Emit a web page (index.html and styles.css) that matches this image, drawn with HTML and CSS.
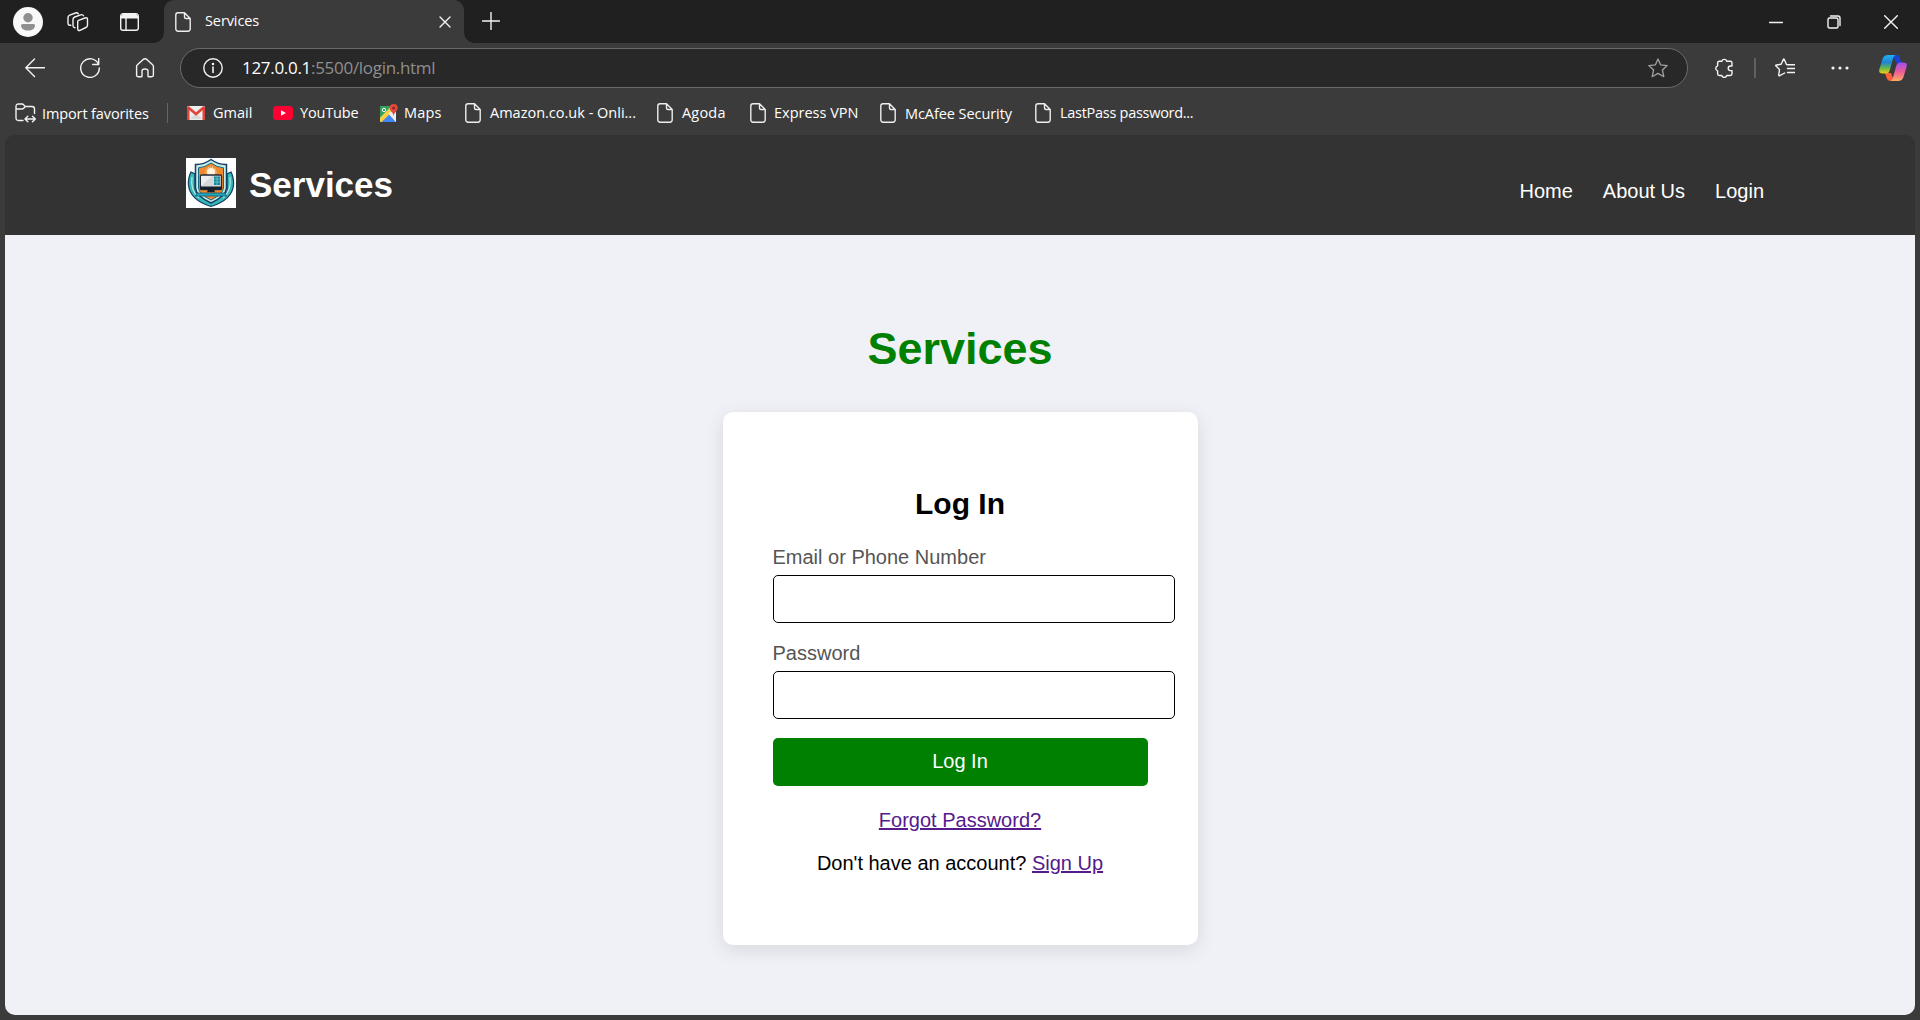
FILE: index.html
```html
<!DOCTYPE html>
<html lang="en">
<head>
<meta charset="utf-8">
<title>Services</title>
<link rel="stylesheet" href="styles.css">
</head>
<body>
<svg class="defs" aria-hidden="true">
  <symbol id="file" viewBox="0 0 16 20"><path d="M3 .8h6.500L15.200 6.500V17a2.200 2.200 0 0 1-2.200 2.200H3A2.200 2.200 0 0 1 .8 17V3A2.200 2.200 0 0 1 3 .8zM9.500.8V5a1.500 1.500 0 0 0 1.500 1.500h4.200" fill="none" stroke="currentColor" stroke-width="1.400" stroke-linejoin="round"/></symbol>
</svg>
<div class="tabstrip">
  <svg class="avatar" viewBox="0 0 30 30"><circle cx="15" cy="15" r="15" fill="#f8f8f8"/><circle cx="15" cy="10.800" r="4.700" fill="#8f8f8f"/><path d="M9.500 17h11a1.500 1.500 0 0 1 1.500 1.500c0 3-3 5-7 5s-7-2-7-5A1.500 1.500 0 0 1 9.500 17z" fill="#8f8f8f"/></svg>
  <svg class="workspaces line" viewBox="0 0 22 20"><path d="M11.500 8.300l6.500-2.300q2.500-.8 2.500 1.500v5.500q0 1.800-1.600 2.500L13 18.300q-2.300.8-2.300-1.500V9.700q0-1 .8-1.400zM8 15.700q-2-.3-2-2V7.200q0-1.500 1.700-2.200l6-2.200q2-.6 2.800 1M3.800 13.200q-2.800.3-2.800-2V5.500q0-1.600 1.700-2.300L8.500 1q2-.6 2.800.8"/></svg>
  <svg class="panes" viewBox="0 0 19 18"><path d="M3 .7h13a2.300 2.300 0 0 1 2.300 2.300v12a2.300 2.300 0 0 1-2.300 2.300H3A2.300 2.300 0 0 1 .7 15V3A2.300 2.300 0 0 1 3 .7zM6 5v12" fill="none" stroke="#f3f3f3" stroke-width="1.400"/><path d="M1 5.500V3l2-2h13l2 2v2.500z" fill="#f3f3f3"/></svg>
  <div class="tab">
    <svg class="file"><use href="#file"/></svg>
    <span class="tab-title">Services</span>
    <svg class="tab-close line" viewBox="0 0 12 12"><path d="M1 1l10 10M11 1L1 11"/></svg>
  </div>
  <svg class="plus line" viewBox="0 0 18 18"><path d="M9 .5v17M.5 9h17"/></svg>
  <div class="window-controls">
    <svg viewBox="0 0 14 14" class="line"><path d="M.5 7.500h13"/></svg>
    <svg viewBox="0 0 14 14" class="line"><rect x="1" y="3" width="10" height="10" rx="1.500"/><path d="M3.500 1h7.500a2 2 0 0 1 2 2v7.500"/></svg>
    <svg viewBox="0 0 14 14" class="line"><path d="M.7.700l12.600 12.600M13.300.700L.7 13.300"/></svg>
  </div>
</div>
<div class="toolbar">
  <svg class="nav-icon line" viewBox="0 0 20 20"><path d="M19.700 9.700H1M9.500 1L.8 9.700l8.700 8.700"/></svg>
  <svg class="nav-icon line" viewBox="0 0 20 20"><path d="M18.500 6.300A9.300 9.300 0 1 0 19.300 10M18.700.5v6h-6"/></svg>
  <svg class="nav-icon line" viewBox="0 0 20 20"><path d="M1.600 17V8.500q0-1 .8-1.700l5.800-5.400q1.800-1.300 3.600 0l5.800 5.400q.8.700.8 1.700V17q0 1.700-1.700 1.700h-2.900q-.8 0-.8-.8V13q0-2-3-2t-3 2v4.900q0 .8-.8.800H3.300Q1.600 18.700 1.600 17z"/></svg>
  <div class="address">
    <svg class="nav-icon line" viewBox="0 0 20 20"><circle cx="10" cy="10" r="9.200"/><path d="M10 9v5.500" stroke-width="1.600"/><circle cx="10" cy="6" r=".6"/></svg>
    <span class="url"><b>127.0.0.1</b>:5500/login.html</span>
    <svg class="nav-icon star" viewBox="0 0 20 20"><path d="M10 1l2.700 5.900 6.500.7-4.800 4.400 1.400 6.700-5.800-3.300-5.800 3.300 1.400-6.700L.8 7.600l6.500-.7z"/></svg>
  </div>
  <svg class="nav-icon line puzzle" viewBox="0 0 20 20"><path d="M7.800 3.300a2.600 2.600 0 0 1 5 0h3.500q1.700 0 1.700 1.700v3h-1.500a2.300 2.300 0 0 0 0 4.600H18v3.200q0 1.700-1.700 1.700h-3.500a2.600 2.600 0 0 1-5 0H5.300q-1.700 0-1.700-1.700v-3a2.600 2.600 0 0 1 0-5V5q0-1.700 1.700-1.700z"/></svg>
  <span class="divider"></span>
  <svg class="nav-icon line favorites" viewBox="0 0 20 20"><path d="M12.700 6.700l-1.200-.2-2.200-5q-.5-.9-1 0L6.100 6.300l-4.800.7q-1 .2-.3 1l3.500 3.500-.8 5.500q0 1.200 1 .7l5-2.700M12.500 10.500H20M13 6.800h7M12.500 14.500H20"/></svg>
  <svg class="dots" viewBox="0 0 18 4"><circle cx="2" cy="2" r="1.600"/><circle cx="9" cy="2" r="1.600"/><circle cx="16" cy="2" r="1.600"/></svg>
  <svg class="copilot" viewBox="0 0 28 26">
    <defs>
      <linearGradient id="cool" x1="0" y1="0" x2="0" y2="1"><stop offset="0" stop-color="#19b5f0"/><stop offset=".4" stop-color="#2383d5"/><stop offset=".7" stop-color="#62b84c"/><stop offset="1" stop-color="#f6cf10"/></linearGradient>
      <linearGradient id="warm" x1="0" y1="0" x2="0" y2="1"><stop offset="0" stop-color="#9b50f5"/><stop offset=".5" stop-color="#ed5a96"/><stop offset="1" stop-color="#ffad63"/></linearGradient>
    </defs>
    <path d="M14 0h4q2 0 2.800 2.500L22.300 8H17z" fill="#1b43cf"/>
    <path d="M6 18h6l3 8h-4q-2.500 0-3.300-2.700z" fill="#fb6038"/>
    <path d="M9 0h8q-2 0-2.700 2.500L10.500 16q-.8 2.600-3.500 2.600H3.500Q-.6 18.600.3 14.500L3.500 4Q4.800 0 9 0z" fill="url(#cool)"/>
    <path d="M21 7.400h3.500q4.100 0 3.200 4.100l-3.200 10.500q-1.300 4-5.500 4h-8q2 0 2.700-2.500L17.500 10q.8-2.600 3.500-2.600z" fill="url(#warm)"/>
  </svg>
</div>
<div class="bookmarks">
  <div class="bm import low"><svg class="line" width="21" height="20" viewBox="0 0 21 20"><path d="M8 17.500H3.500Q1 17.500 1 15V3.500Q1 1 3.500 1H7q1 0 1.800 1l1.500 1.500H17Q19.500 3.500 19.500 6v4.500M1 6h6q1 0 1.700-.8l1.600-1.700M10.500 16h9.500M12.800 13.300L10 16l2.800 2.700M17.500 13.300l2.800 2.700-2.800 2.700"/></svg><span>Import favorites</span></div>
  <span class="separator"></span>
  <div class="bm gmail"><svg width="18" height="14" viewBox="0 0 18 14"><rect width="18" height="14" rx="1" fill="#ededed"/><path d="M3 13l6-6 6 6" fill="#d8d8d8"/><path d="M0 1.500Q0 0 1.500 0L9 6.300 16.500 0Q18 0 18 1.500V14h-2.500V4.300L9 9.700 2.500 4.300V14H0z" fill="#e0453a"/></svg><span>Gmail</span></div>
  <div class="bm youtube"><svg width="20" height="14" viewBox="0 0 20 14"><rect width="20" height="14" rx="3.500" fill="#f03"/><path d="M8 4.200v5.600l5-2.800z" fill="#fff"/></svg><span>YouTube</span></div>
  <div class="bm maps"><svg width="18" height="18" viewBox="0 0 18 18"><path d="M0 2h16v16H0z" fill="#f3f3f3"/><path d="M0 2h12L0 14z" fill="#34a05a"/><path d="M0 18L8.500 9.500 16 18z" fill="#4285f4"/><path d="M0 14L12 2l2 4L1.500 18H0z" fill="#fbce3c"/><path d="M8.500 9.500l2-2L16 13v5z" fill="#eee"/><circle cx="4" cy="6" r="1.700" fill="none" stroke="#fff"/><path d="M13.700 0a4 4 0 0 1 4 4c0 3-3.500 4-4 8-.5-4-4-5-4-8a4 4 0 0 1 4-4z" fill="#e34a3c"/><circle cx="13.700" cy="4" r="1.500" fill="#842b28"/></svg><span>Maps</span></div>
  <div class="bm amazon"><svg class="file"><use href="#file"/></svg><span>Amazon.co.uk - Onli...</span></div>
  <div class="bm agoda"><svg class="file"><use href="#file"/></svg><span>Agoda</span></div>
  <div class="bm vpn"><svg class="file"><use href="#file"/></svg><span>Express VPN</span></div>
  <div class="bm mcafee low"><svg class="file"><use href="#file"/></svg><span>McAfee Security</span></div>
  <div class="bm lastpass"><svg class="file"><use href="#file"/></svg><span>LastPass password...</span></div>
</div>
<div class="page">
  <header class="site-header">
    <div class="brand">
      <svg class="logo" viewBox="0 0 50 50">
        <rect width="50" height="50" fill="#fff"/>
        <path d="M5 14q-3 6-2.500 13Q4 42 25 48.500 46 42 47.500 27 48 20 45 14l-4 2v18L25 44 9 34V16z" fill="#35b9b7" stroke="#173f66" stroke-width="1.300"/>
        <path d="M6 19q-2 13 7 21M44 19q2 13-7 21" fill="none" stroke="#a6e6df" stroke-width="1.300"/>
        <path d="M25 1.500Q33 7 40.500 6.500V30Q40 38 25 45 10 38 9.500 30V6.500Q17 7 25 1.500z" fill="#c6eee8" stroke="#173f66" stroke-width="1.500"/>
        <path d="M25 5Q31 9.500 37.500 9.800V30Q37 36 25 42 13 36 12.500 30V9.800Q19 9.500 25 5z" fill="#f08a2c" stroke="#19677f" stroke-width="1"/>
        <circle cx="25" cy="14" r="4" fill="#fff5df"/><circle cx="25" cy="14" r="5" fill="none" stroke="#fff5df" stroke-dasharray="1 1"/>
        <rect x="14.500" y="17" width="21" height="14.500" rx="1" fill="#d4d8da" stroke="#202d3a" stroke-width="1.300"/><path d="M15 18h11L15 28z" fill="#eee"/>
        <rect x="28" y="18.500" width="6" height="8.500" fill="#16849b"/><path d="M28 21h6M28 24h6M31 19v8" stroke="#70d3d8" stroke-width=".7"/>
        <path d="M14 28.500h22v3H14zM22 31.500h6l1 2.800h-8z" fill="#14202b"/><path d="M11 35h28l1.500 3h-31z" fill="#22a9bb" stroke="#145371" stroke-width=".8"/>
      </svg>
      <div class="brand-name">Services</div>
    </div>
    <nav class="site-nav"><a>Home</a><a>About Us</a><a>Login</a></nav>
  </header>
  <main>
    <h1>Services</h1>
    <form class="card">
      <h2>Log In</h2>
      <label for="email">Email or Phone Number</label>
      <input id="email" type="text">
      <label for="password">Password</label>
      <input id="password" type="password">
      <button type="button">Log In</button>
      <p><a href="#">Forgot Password?</a></p>
      <p>Don't have an account? <a href="#">Sign Up</a></p>
    </form>
  </main>
</div>
</body>
</html>
```
FILE: styles.css
```css
* { box-sizing: border-box; }
html, body { margin: 0; height: 100%; }
body {
  display: flex;
  flex-direction: column;
  overflow: hidden;
  background: #3b3b3b;
  color: #fff;
  font-family: "Open Sans", "Noto Sans", sans-serif;
  font-size: 14.5px;
}
svg { display: block; flex: none; }
.defs { position: absolute; width: 0; height: 0; }
.line { fill: none; stroke: #f3f3f3; stroke-width: 1.4; stroke-linecap: round; stroke-linejoin: round; }
.file { width: 16px; height: 20px; color: #eee; }

/* Tab strip */
.tabstrip { display: flex; align-items: center; height: 43px; flex: none; padding-left: 13px; background: #202020; }
.avatar { width: 30px; height: 30px; }
.workspaces { width: 22px; height: 20px; margin-left: 24px; }
.panes { width: 19px; height: 18px; margin-left: 31px; }
.tab { position: relative; display: flex; align-items: center; width: 300px; height: 43px; margin-left: 25px; padding: 0 13px 0 11px; border-radius: 10px 10px 0 0; background: #3b3b3b; }
.tab::before, .tab::after { content: ""; position: absolute; bottom: 0; width: 10px; height: 10px; }
.tab::before { right: 100%; background: radial-gradient(circle at 0 0, transparent 9.5px, #3b3b3b 10px); }
.tab::after { left: 100%; background: radial-gradient(circle at 100% 0, transparent 9.5px, #3b3b3b 10px); }
.tab-title { margin-left: 14px; padding-bottom: 2px; line-height: 20px; letter-spacing: -.1px; }
.tab-close { width: 12px; height: 12px; margin-left: auto; }
.plus { width: 18px; height: 18px; margin: 0 0 1px 18px; }
.window-controls { display: flex; gap: 43.5px; margin-left: auto; padding-right: 22px; }
.window-controls svg { width: 14px; height: 14px; }

/* Toolbar */
.toolbar { display: flex; align-items: center; height: 50px; flex: none; padding-left: 25px; }
.nav-icon { width: 20px; height: 20px; }
.toolbar > .nav-icon + .nav-icon { margin-left: 35px; }
.address { display: flex; align-items: center; width: 1508px; height: 40px; margin-left: 25px; padding: 0 19px 0 22px; border: 1px solid #6b6b6b; border-radius: 20px; background: #282828; }
.url { margin-left: 19px; color: #8f8f8f; font-size: 17px; line-height: 20px; letter-spacing: -.3px; white-space: nowrap; }
.url b { color: #fff; font-weight: 400; }
.star { margin-left: auto; fill: none; stroke: #a0a0a0; stroke-width: 1.3; stroke-linejoin: round; }
.puzzle { margin-left: 26px; }
.divider { width: 2px; height: 20px; margin-left: 20px; background: #606060; }
.favorites { margin-left: 19px; }
.dots { width: 18px; height: 4px; margin-left: 36px; fill: #f3f3f3; }
.copilot { width: 28px; height: 26px; margin-left: 30px; }

/* Bookmarks bar */
.bookmarks { display: flex; align-items: center; height: 42px; flex: none; padding: 0 0 2px 15px; }
.bm { display: flex; align-items: center; gap: 9px; flex: none; line-height: 20px; white-space: nowrap; }
.low span { padding-top: 2px; }
.import { width: 134px; gap: 6px; letter-spacing: -.12px; }
.separator { width: 1px; height: 20px; margin: 0 19px 0 18px; background: #666; }
.gmail { width: 86px; gap: 8px; }
.youtube { width: 107px; gap: 7px; letter-spacing: -.15px; }
.maps { width: 85px; gap: 6px; letter-spacing: .2px; }
.amazon { width: 192px; }
.agoda { width: 93px; letter-spacing: .2px; }
.vpn { width: 130px; gap: 8px; }
.mcafee { width: 155px; letter-spacing: -.07px; }
.lastpass { letter-spacing: -.28px; }

/* Site */
.page { flex: 1; display: flex; flex-direction: column; margin: 0 5px 5px; overflow: hidden; border-radius: 10px; background: linear-gradient(#333 50px, #f0f1f6 50px); font-family: "Liberation Sans", Arial, sans-serif; font-size: 20px; line-height: 23px; }
.site-header { display: flex; justify-content: space-between; height: 100px; flex: none; padding: 23px 151px 0 181px; background: #333; }
.brand { display: flex; gap: 13px; }
.logo { width: 50px; height: 50px; }
.brand-name { padding-top: 7px; font-size: 35px; font-weight: 700; line-height: 40px; }
.site-nav { display: flex; gap: 30px; padding-top: 22px; }
main { display: flex; flex-direction: column; align-items: center; padding-top: 88px; color: #000; }
h1 { margin: 0; color: #008000; font-size: 45px; line-height: 51px; }
.card { width: 475px; height: 533px; margin-top: 38px; padding: 75px 50px 0; border-radius: 10px; background: #fff; box-shadow: 0 5px 19px rgba(0, 0, 0, .1); }
h2 { margin: 0 0 25px; font-size: 30px; line-height: 34px; text-align: center; }
label { display: block; margin-bottom: 6px; color: #555; }
input { display: block; width: 402px; height: 48px; margin: 0 0 19px; border: 1px solid #000; border-radius: 5px; background: #fff; }
button { display: block; width: 375px; height: 48px; padding: 0 0 2px; border: 0; border-radius: 5px; background: #008000; color: #fff; font: inherit; }
.card p { margin: 20px 0 0; text-align: center; }
.card button + p { margin-top: 23px; }
.card a { color: #551a8b; }
```
